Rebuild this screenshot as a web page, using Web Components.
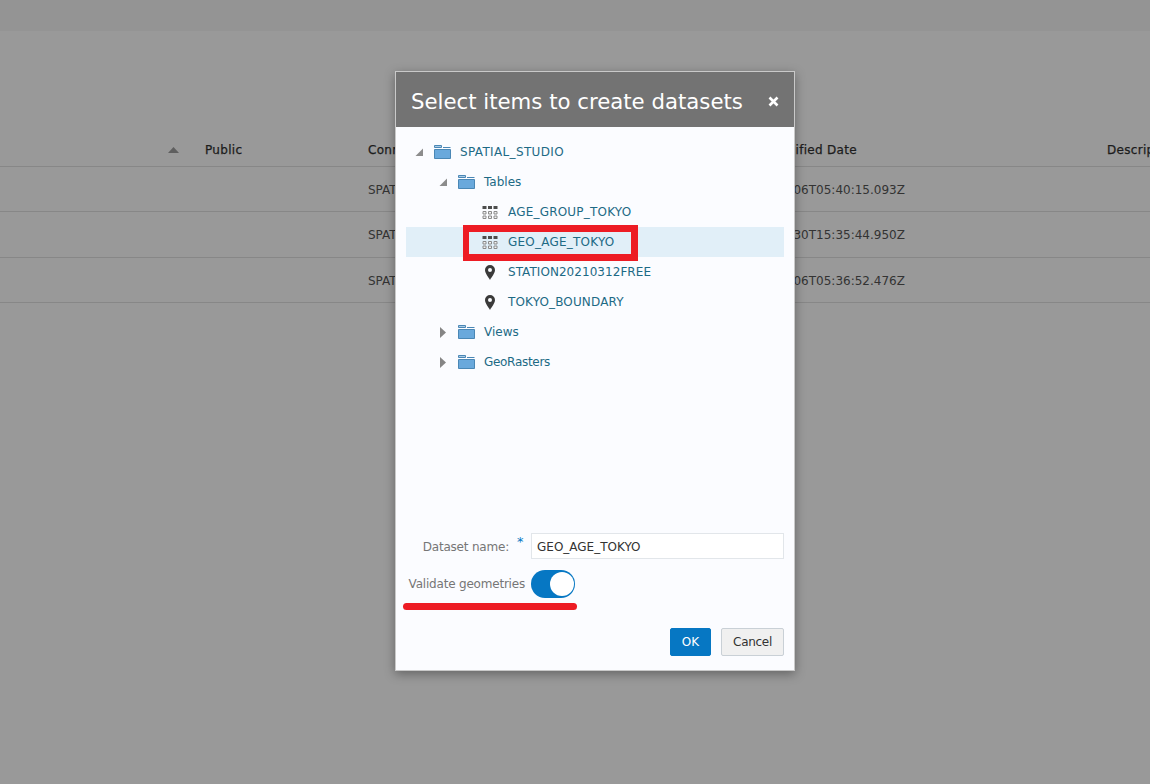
<!DOCTYPE html>
<html>
<head>
<meta charset="utf-8">
<title>Select items to create datasets</title>
<style>
  html, body { margin: 0; height: 100%; }
  body { font-family: "DejaVu Sans", "Noto Sans CJK JP", sans-serif; font-size: 12px; overflow: hidden; }
</style>
</head>
<body>
<dataset-page>
  <data-table>
    <table-row head>
      <span slot="name">Name</span><span slot="public">Public</span><span slot="conn">Connection</span>
      <span slot="date">Last Modified Date</span><span slot="desc">Description</span>
    </table-row>
    <table-row>
      <span slot="conn">SPATIAL_STUDIO</span><span slot="date">2021-03-06T05:40:15.093Z</span>
    </table-row>
    <table-row tall>
      <span slot="conn">SPATIAL_STUDIO</span><span slot="date">2021-03-30T15:35:44.950Z</span>
    </table-row>
    <table-row>
      <span slot="conn">SPATIAL_STUDIO</span><span slot="date">2021-03-06T05:36:52.476Z</span>
    </table-row>
  </data-table>

  <modal-dialog slot="modal" heading="Select items to create datasets">
    <tree-node label="SPATIAL_STUDIO" icon="folder" state="open" depth="0" style="--ls:.35px">
      <tree-node label="Tables" icon="folder" state="open" depth="1" style="--ls:0">
        <tree-node label="AGE_GROUP_TOKYO" icon="table" depth="2" style="--ls:.2px"></tree-node>
        <tree-node label="GEO_AGE_TOKYO" icon="table" depth="2" selected style="--ls:.23px"></tree-node>
        <tree-node label="STATION20210312FREE" icon="pin" depth="2" style="--ls:.05px"></tree-node>
        <tree-node label="TOKYO_BOUNDARY" icon="pin" depth="2" style="--ls:.14px"></tree-node>
      </tree-node>
      <tree-node label="Views" icon="folder" state="closed" depth="1" style="--ls:0"></tree-node>
      <tree-node label="GeoRasters" icon="folder" state="closed" depth="1" style="--ls:-.3px"></tree-node>
    </tree-node>

    <dataset-form slot="form" value="GEO_AGE_TOKYO"></dataset-form>

    <action-button slot="actions" primary>OK</action-button>
    <action-button slot="actions">Cancel</action-button>

    <red-mark slot="marks" kind="box"></red-mark>
    <red-mark slot="marks" kind="line"></red-mark>
  </modal-dialog>
</dataset-page>

<script>
// page behind the dialog
class DatasetPage extends HTMLElement {
  constructor() {
    super();
    this.attachShadow({ mode: 'open' }).innerHTML = `
<style>
  :host { display: block; position: relative; width: 1150px; height: 784px; background: #999; overflow: hidden; }
  .top { height: 31px; background: #949494; }
  .content { padding-top: 104px; }
</style>
<div class="top"></div>
<div class="content"><slot></slot></div>
<slot name="modal"></slot>`;
  }
}

class DataTable extends HTMLElement {
  constructor() {
    super();
    this.attachShadow({ mode: 'open' }).innerHTML = `
<style>
  :host { display: block; color: #333; }
</style>
<slot></slot>`;
  }
}

class TableRow extends HTMLElement {
  constructor() {
    super();
    this.attachShadow({ mode: 'open' }).innerHTML = `
<style>
  :host {
    display: grid;
    grid-template-columns: 205px 163px 371px 368px 43px;
    align-items: center;
    height: 45px;
    padding-top: 1px;
    box-sizing: border-box;
    border-bottom: 1px solid #878787;
    white-space: nowrap;
    overflow: hidden;
  }
  :host([tall]) { height: 46px; padding-top: 0; }
  :host([head]) {
    height: 32px; padding: 0 0 2px; color: #1c1c1c;
    letter-spacing: .3px; -webkit-text-stroke: .25px #1c1c1c;
  }
  .name { display: flex; justify-content: flex-end; padding-right: 26px; }
  .name svg { display: none; }
  .name ::slotted(*) { display: none; }
  :host([head]) .name svg { display: block; }
</style>
<div class="name"><svg width="11" height="6" viewBox="0 0 11 6"><path d="M5.500 0L11 6H0z" fill="#5f5f5f"/></svg><slot name="name"></slot></div>
<div><slot name="public"></slot></div>
<div><slot name="conn"></slot></div>
<div><slot name="date"></slot></div>
<div><slot name="desc"></slot></div>`;
  }
}

class ModalDialog extends HTMLElement {
  constructor() {
    super();
    this.attachShadow({ mode: 'open' }).innerHTML = `
<style>
  :host {
    position: absolute; left: 395px; top: 71px;
    box-sizing: border-box; width: 400px; height: 600px;
    display: flex; flex-direction: column;
    background: #fbfcff; border: 1px solid #c9c9c9;
    box-shadow: 0 3px 10px rgba(0,0,0,.35);
  }
  header {
    flex: none; height: 55px; box-sizing: border-box; padding: 4px 15px 0;
    background: #737373; color: #fff;
    display: flex; align-items: center; justify-content: space-between;
  }
  h1 { margin: 0; font-size: 21.25px; font-weight: 400; white-space: nowrap; }
  .close { width: 11px; height: 11px; display: block; }
  .tree { flex: 1; padding: 10px 10px 0; }
  .footer { display: flex; justify-content: flex-end; gap: 10px; padding: 0 10px 14px; }
</style>
<header><h1></h1>
  <svg class="close" viewBox="0 0 11 11"><path d="M1.500 1.500l8 8M9.500 1.500l-8 8" stroke="#fff" stroke-width="2.600"/></svg>
</header>
<div class="tree"><slot></slot></div>
<slot name="form"></slot>
<div class="footer"><slot name="actions"></slot></div>
<slot name="marks"></slot>`;
    this.shadowRoot.querySelector('h1').textContent = this.getAttribute('heading');
  }
}

const ICONS = {
  folder: `<svg width="17" height="14" viewBox="0 0 17 14"><path d="M.5 .5h7v2H.5z" fill="#a9cbe6" stroke="#4a87b5"/><path d="M9 2.500h7.500" stroke="#4a87b5"/><path d="M.5 4.500h16v9H.5z" fill="#6aa9dc" stroke="#4a87b5"/></svg>`,
  table: `<svg width="16" height="13" viewBox="0 0 16 13"><path d="M.5 0h4v3h-4zM6 0h4v3H6zM11.500 0h4v3h-4z" fill="#4d4d4d"/><path d="M1 5.500h3v2.500H1zM6.500 5.500h3v2.500h-3zM12 5.500h3v2.500h-3zM1 10h3v2.500H1zM6.500 10h3v2.500h-3zM12 10h3v2.500h-3z" fill="#f2f2f2" stroke="#8a8a8a"/></svg>`,
  pin: `<svg width="16" height="15" viewBox="0 0 16 15"><path fill-rule="evenodd" d="M8 0a5 5 0 0 1 5 5c0 3.400-3.500 7-5 10-1.500-3-5-6.600-5-10a5 5 0 0 1 5-5zm0 3a2 2 0 1 0 0 4 2 2 0 0 0 0-4z" fill="#3a3a3a"/></svg>`
};

class TreeNode extends HTMLElement {
  constructor() {
    super();
    const depth = Number(this.getAttribute('depth') || 0);
    const state = this.getAttribute('state');
    let arrow = '';
    if (state === 'open') arrow = '<svg width="10" height="10" viewBox="0 0 10 10"><path d="M9 1.500V9H1.500z" fill="#8c8c8c"/></svg>';
    if (state === 'closed') arrow = '<svg width="10" height="11" viewBox="0 0 10 11"><path d="M2 0l6 5.500L2 11z" fill="#858585"/></svg>';
    this.attachShadow({ mode: 'open' }).innerHTML = `
<style>
  :host { display: block; }
  .row {
    height: 30px; display: flex; align-items: center;
    padding-left: ${8 + depth * 24}px;
    color: #1d6a85; white-space: nowrap;
  }
  :host([selected]) .row { background: #e1eff8; }
  .arrow { width: 20px; flex: none; display: flex; }
  .icon { width: 26px; flex: none; display: flex; }
  .leaf { width: 20px; flex: none; }
  .label { letter-spacing: var(--ls, 0); }
</style>
<div class="row"><span class="${state ? 'arrow' : 'leaf'}">${arrow}</span><span class="icon">${ICONS[this.getAttribute('icon')]}</span><span class="label"></span></div>
<slot></slot>`;
    this.shadowRoot.querySelector('.label').textContent = this.getAttribute('label');
  }
}

class DatasetForm extends HTMLElement {
  constructor() {
    super();
    this.attachShadow({ mode: 'open' }).innerHTML = `
<style>
  :host {
    display: grid; grid-template-columns: 135px 1fr; row-gap: 11px;
    align-items: center; padding: 0 10px 30px 0; color: #767676;
  }
  .lbl { text-align: right; padding-right: 6px; white-space: nowrap; letter-spacing: -.2px; }
  .req { color: #0677c3; position: absolute; margin: -6px 0 0 8px; font-size: 13px; }
  input {
    box-sizing: border-box; width: 100%; height: 26px; padding: 2px 5px 0;
    border: 1px solid #e2e6ea; background: #fff; font: inherit; color: #333; outline: 0;
  }
  .cell { display: flex; }
</style>
<div class="lbl" style="padding-right:22px;margin-top:2px">Dataset name:<span class="req">*</span></div>
<div class="cell"><input></div>
<div class="lbl">Validate geometries</div>
<div class="cell"><toggle-switch checked></toggle-switch></div>`;
    this.shadowRoot.querySelector('input').value = this.getAttribute('value');
  }
}

class ToggleSwitch extends HTMLElement {
  constructor() {
    super();
    this.attachShadow({ mode: 'open' }).innerHTML = `
<style>
  :host {
    box-sizing: border-box; width: 44px; height: 28px; border-radius: 14px;
    background: #0677c3; padding: 2px 1px; display: flex; justify-content: flex-end;
  }
  i { width: 24px; height: 24px; border-radius: 50%; background: #fff; display: block; }
</style>
<i></i>`;
  }
}

class ActionButton extends HTMLElement {
  constructor() {
    super();
    this.attachShadow({ mode: 'open' }).innerHTML = `
<style>
  :host {
    display: flex; align-items: center; justify-content: center; box-sizing: border-box; height: 28px;
    width: 63px; background: #f0f0f0; border: 1px solid #c9d0d6; border-radius: 2px; color: #333;
    letter-spacing: -.3px;
  }
  :host([primary]) { width: 41px; background: #0677c3; border-color: #0677c3; color: #fff; letter-spacing: 0; }
</style>
<slot></slot>`;
  }
}

// red annotations painted over the screenshot
class RedMark extends HTMLElement {
  constructor() {
    super();
    this.attachShadow({ mode: 'open' }).innerHTML = `
<style>
  :host { position: absolute; box-sizing: border-box; }
  :host([kind=box]) { left: 67px; top: 153px; width: 175px; height: 36px; border: 7px solid #ed1c24; border-left-width: 6px; }
  :host([kind=line]) { left: 7px; top: 531px; width: 174px; height: 7px; border-radius: 4px; background: #ed1c24; }
</style>`;
  }
}

customElements.define('dataset-page', DatasetPage);
customElements.define('data-table', DataTable);
customElements.define('table-row', TableRow);
customElements.define('modal-dialog', ModalDialog);
customElements.define('tree-node', TreeNode);
customElements.define('dataset-form', DatasetForm);
customElements.define('toggle-switch', ToggleSwitch);
customElements.define('action-button', ActionButton);
customElements.define('red-mark', RedMark);
</script>
</body>
</html>
